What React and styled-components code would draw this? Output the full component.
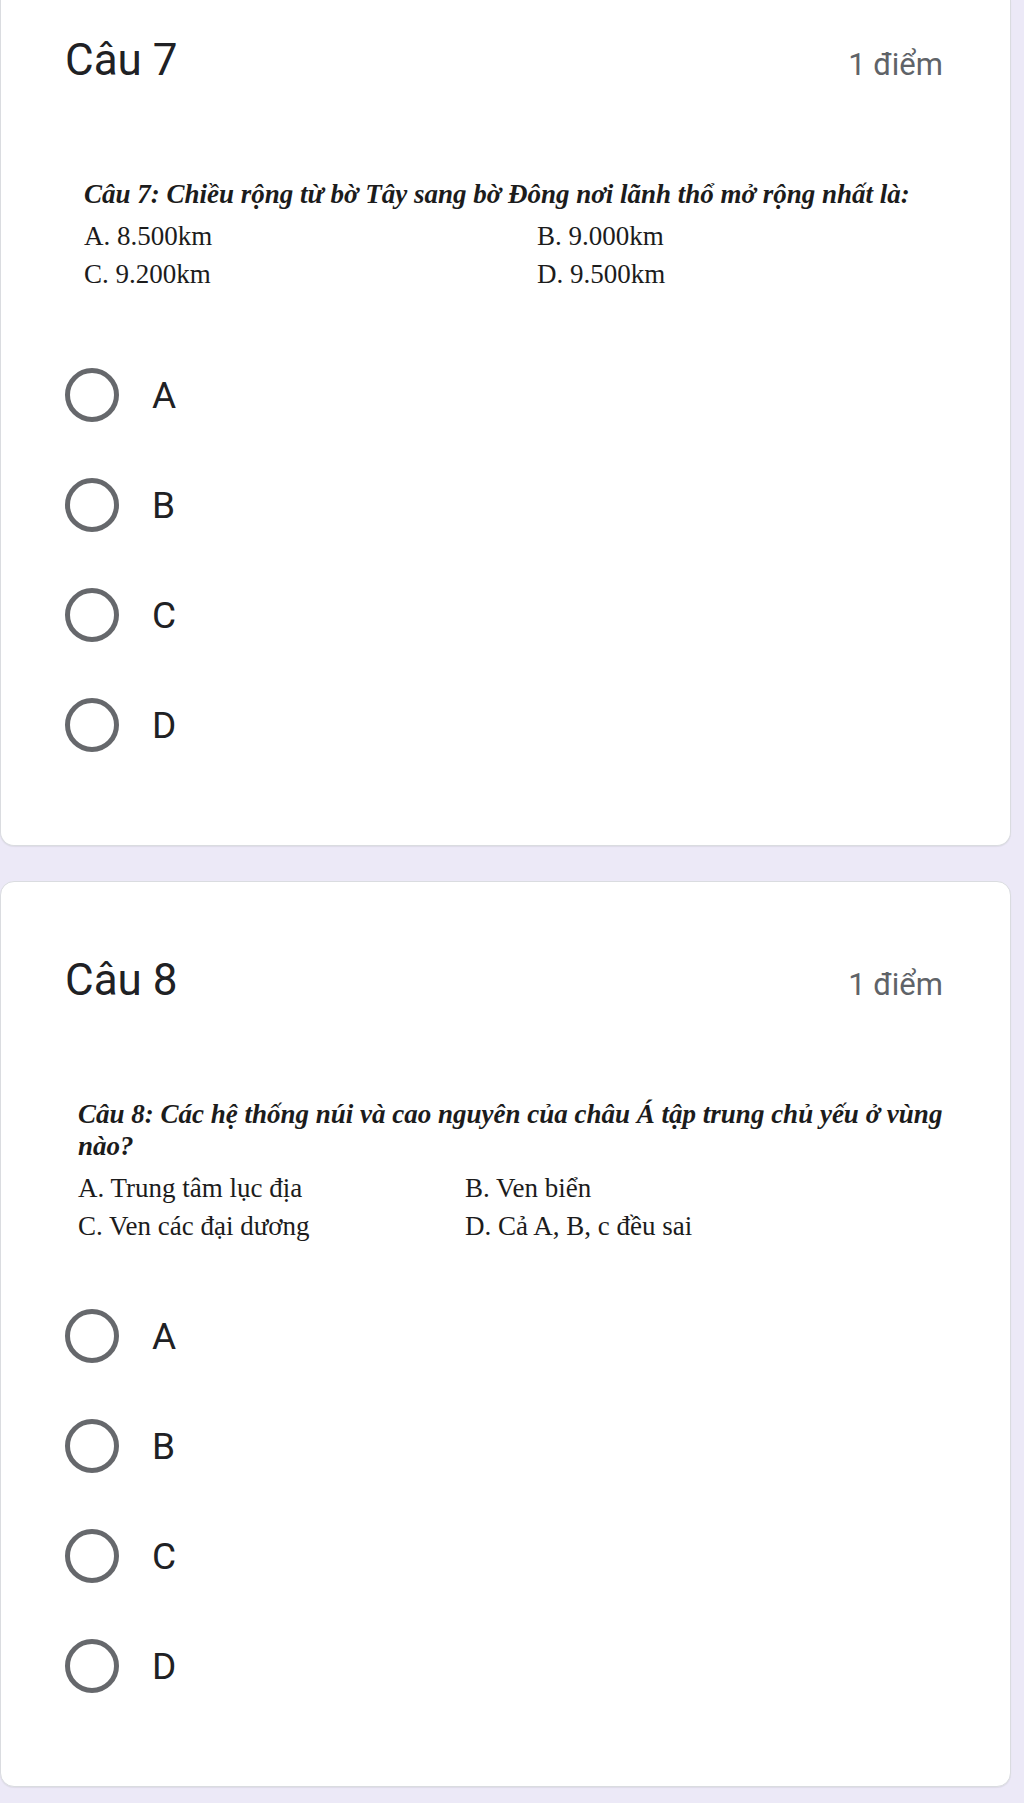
import React from "react";
import styled, { createGlobalStyle } from "styled-components";

const questions = [
  {
    id: 7,
    points: "1 điểm",
    prompt:
      "Câu 7: Chiều rộng từ bờ Tây sang bờ Đông nơi lãnh thổ mở rộng nhất là:",
    answers: ["A. 8.500km", "B. 9.000km", "C. 9.200km", "D. 9.500km"],
    indent: 83,
    col: 453,
    after: 47,
    first: true,
  },
  {
    id: 8,
    points: "1 điểm",
    prompt:
      "Câu 8: Các hệ thống núi và cao nguyên của châu Á tập trung chủ yếu ở vùng nào?",
    answers: [
      "A. Trung tâm lục địa",
      "B. Ven biển",
      "C. Ven các đại dương",
      "D. Cả A, B, c đều sai",
    ],
    indent: 77,
    col: 387,
    after: 36,
    first: false,
  },
];

const choices = ["A", "B", "C", "D"];

const App = () => {
  return (
    <>
      <GlobalStyle />
      <Page>
        {questions.map((q) => (
          <Card key={q.id} $first={q.first}>
            <TitleRow>
              <Title>Câu {q.id}</Title>
              <Points>{q.points}</Points>
            </TitleRow>
            <Question $indent={q.indent} $after={q.after}>
              <Prompt>{q.prompt}</Prompt>
              <Answers $col={q.col}>
                {q.answers.map((a) => (
                  <Answer key={a}>{a}</Answer>
                ))}
              </Answers>
            </Question>
            <Choices>
              {choices.map((c) => (
                <Choice key={c}>
                  <Radio />
                  <Label>{c}</Label>
                </Choice>
              ))}
            </Choices>
          </Card>
        ))}
      </Page>
    </>
  );
};
export default App;

const GlobalStyle = createGlobalStyle`
  html, body {
    margin: 0;
    padding: 0;
    background: #ece9f7;
  }
  body {
    font-family: Roboto, "Noto Sans", sans-serif;
    color: #202124;
  }
`;

const Page = styled.div`
  width: 1024px;
  display: flex;
  flex-direction: column;
  gap: 35px;
  padding: 0 13px 15px 0;
  box-sizing: border-box;
`;

const Card = styled.div`
  background: #ffffff;
  border: 1px solid #dadce0;
  border-top: ${(p) => (p.$first ? "none" : "1px solid #dadce0")};
  border-radius: ${(p) => (p.$first ? "0 0 14px 14px" : "14px")};
  padding: ${(p) => (p.$first ? "34px" : "72px")} 0 65px 0;
  box-shadow: 0 1px 1px rgba(60, 64, 67, 0.08);
`;

const TitleRow = styled.div`
  display: flex;
  justify-content: space-between;
  align-items: baseline;
  padding: 0 67px 0 64px;
  height: 52px;
`;

const Title = styled.div`
  font-size: 44px;
  line-height: 52px;
  font-weight: 400;
  color: #202124;
`;

const Points = styled.div`
  font-size: 31px;
  line-height: 52px;
  color: #5f6368;
`;

const Question = styled.div`
  margin-top: 92px;
  padding-left: ${(p) => p.$indent}px;
  padding-bottom: ${(p) => p.$after}px;
  font-family: "Liberation Serif", "Times New Roman", serif;
  font-size: 27px;
  color: #1c1c1c;
`;

const Prompt = styled.div`
  max-width: 880px;
  line-height: 32px;
  font-weight: 700;
  font-style: italic;
`;

const Answers = styled.div`
  display: grid;
  grid-template-columns: ${(p) => p.$col}px auto;
  margin-top: 7px;
`;

const Answer = styled.div`
  line-height: 38px;
`;

const Choices = styled.div`
  display: flex;
  flex-direction: column;
`;

const Choice = styled.div`
  display: flex;
  align-items: center;
  height: 110px;
  padding-left: 64px;
`;

const Radio = styled.span`
  width: 54px;
  height: 54px;
  box-sizing: border-box;
  border: 5px solid #66686c;
  border-radius: 50%;
  flex-shrink: 0;
`;

const Label = styled.span`
  margin-left: 33px;
  font-size: 37px;
  color: #202124;
`;
